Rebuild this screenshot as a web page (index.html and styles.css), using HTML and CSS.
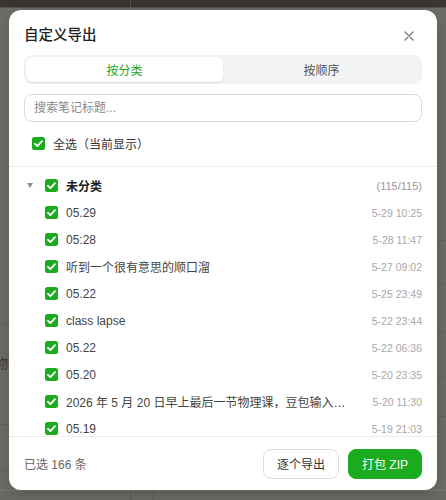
FILE: index.html
```html
<!DOCTYPE html>
<html lang="zh">
<head>
<meta charset="utf-8">
<title>自定义导出</title>
<link rel="stylesheet" href="styles.css">
</head>
<body>
<div class="page">
  <div class="topbar"><span class="topbar-seg"></span><span class="topbar-seg"></span></div>
  <div class="bg-cols">
    <div class="bg-col">
      <div class="bg-row" style="height:316px"></div>
      <div class="bg-row bg-text-row" style="height:101px"><span class="bg-text">物理</span></div>
      <div class="bg-row" style="height:46px"></div>
    </div>
    <div class="bg-col">
      <div class="bg-row" style="height:233px"></div>
      <div class="bg-row" style="height:44px"></div>
      <div class="bg-row" style="height:47px"></div>
      <div class="bg-row" style="height:46px"></div>
      <div class="bg-row" style="height:39px"></div>
    </div>
  </div>
  <div class="bottombar"><span class="bb-seg"></span><span class="bb-seg"></span><span class="bb-seg"></span></div>
</div>

<div class="overlay">
  <div class="modal">
    <div class="modal-head">
      <div class="title-row">
        <h2 class="title">自定义导出</h2>
        <button class="close" aria-label="关闭">
          <svg width="10" height="10" viewBox="0 0 10 10"><path d="M1 1L9 9M9 1L1 9" stroke="#777" stroke-width="1.3" stroke-linecap="round"/></svg>
        </button>
      </div>
      <div class="tabs">
        <div class="tab active">按分类</div>
        <div class="tab">按顺序</div>
      </div>
      <input class="search" type="text" placeholder="搜索笔记标题...">
      <label class="select-all">
        <span class="cb"><svg width="13" height="13" viewBox="0 0 13 13"><path d="M3 6.8L5.4 9.1L10 4.1" fill="none" stroke="#fff" stroke-width="1.8" stroke-linecap="round" stroke-linejoin="round"/></svg></span>
        <span>全选（当前显示）</span>
      </label>
    </div>

    <div class="list">
      <div class="row group">
        <span class="caret"></span>
        <span class="cb"><svg width="13" height="13" viewBox="0 0 13 13"><path d="M3 6.8L5.4 9.1L10 4.1" fill="none" stroke="#fff" stroke-width="1.8" stroke-linecap="round" stroke-linejoin="round"/></svg></span>
        <span class="name">未分类</span>
        <span class="meta count">(115/115)</span>
      </div>
      <div class="row item">
        <span class="cb"><svg width="13" height="13" viewBox="0 0 13 13"><path d="M3 6.8L5.4 9.1L10 4.1" fill="none" stroke="#fff" stroke-width="1.8" stroke-linecap="round" stroke-linejoin="round"/></svg></span>
        <span class="name">05.29</span><span class="meta">5-29 10:25</span>
      </div>
      <div class="row item">
        <span class="cb"><svg width="13" height="13" viewBox="0 0 13 13"><path d="M3 6.8L5.4 9.1L10 4.1" fill="none" stroke="#fff" stroke-width="1.8" stroke-linecap="round" stroke-linejoin="round"/></svg></span>
        <span class="name">05:28</span><span class="meta">5-28 11:47</span>
      </div>
      <div class="row item">
        <span class="cb"><svg width="13" height="13" viewBox="0 0 13 13"><path d="M3 6.8L5.4 9.1L10 4.1" fill="none" stroke="#fff" stroke-width="1.8" stroke-linecap="round" stroke-linejoin="round"/></svg></span>
        <span class="name">听到一个很有意思的顺口溜</span><span class="meta">5-27 09:02</span>
      </div>
      <div class="row item">
        <span class="cb"><svg width="13" height="13" viewBox="0 0 13 13"><path d="M3 6.8L5.4 9.1L10 4.1" fill="none" stroke="#fff" stroke-width="1.8" stroke-linecap="round" stroke-linejoin="round"/></svg></span>
        <span class="name">05.22</span><span class="meta">5-25 23:49</span>
      </div>
      <div class="row item">
        <span class="cb"><svg width="13" height="13" viewBox="0 0 13 13"><path d="M3 6.8L5.4 9.1L10 4.1" fill="none" stroke="#fff" stroke-width="1.8" stroke-linecap="round" stroke-linejoin="round"/></svg></span>
        <span class="name">class lapse</span><span class="meta">5-22 23:44</span>
      </div>
      <div class="row item">
        <span class="cb"><svg width="13" height="13" viewBox="0 0 13 13"><path d="M3 6.8L5.4 9.1L10 4.1" fill="none" stroke="#fff" stroke-width="1.8" stroke-linecap="round" stroke-linejoin="round"/></svg></span>
        <span class="name">05.22</span><span class="meta">5-22 06:36</span>
      </div>
      <div class="row item">
        <span class="cb"><svg width="13" height="13" viewBox="0 0 13 13"><path d="M3 6.8L5.4 9.1L10 4.1" fill="none" stroke="#fff" stroke-width="1.8" stroke-linecap="round" stroke-linejoin="round"/></svg></span>
        <span class="name">05.20</span><span class="meta">5-20 23:35</span>
      </div>
      <div class="row item">
        <span class="cb"><svg width="13" height="13" viewBox="0 0 13 13"><path d="M3 6.8L5.4 9.1L10 4.1" fill="none" stroke="#fff" stroke-width="1.8" stroke-linecap="round" stroke-linejoin="round"/></svg></span>
        <span class="name">2026 年 5 月 20 日早上最后一节物理课，豆包输入…</span><span class="meta">5-20 11:30</span>
      </div>
      <div class="row item">
        <span class="cb"><svg width="13" height="13" viewBox="0 0 13 13"><path d="M3 6.8L5.4 9.1L10 4.1" fill="none" stroke="#fff" stroke-width="1.8" stroke-linecap="round" stroke-linejoin="round"/></svg></span>
        <span class="name">05.19</span><span class="meta">5-19 21:03</span>
      </div>
    </div>

    <div class="modal-foot">
      <span class="selected">已选 166 条</span>
      <div class="actions">
        <button class="btn">逐个导出</button>
        <button class="btn primary">打包 ZIP</button>
      </div>
    </div>
  </div>
</div>
</body>
</html>
```

FILE: styles.css
```css
* { box-sizing: border-box; }
html, body { margin: 0; padding: 0; }
body {
  width: 446px;
  height: 500px;
  overflow: hidden;
  background: #6e6c67;
  font-family: "Liberation Sans", "Noto Sans CJK SC", sans-serif;
  position: relative;
}

/* underlying page (dimmed) */
.page { height: 500px; display: flex; flex-direction: column; }
.topbar {
  height: 8px;
  background: #3b342f;
  border-bottom: 1px solid #57524d;
  display: grid;
  grid-template-columns: 130px 1fr;
}
.topbar-seg + .topbar-seg { border-left: 1px solid #5a534d; }
.bg-cols { flex: 1; display: grid; grid-template-columns: 1fr 1fr; }
.bg-row { border-bottom: 1px solid #64625d; position: relative; }
.bg-text-row { display: flex; align-items: center; }
.bg-text-row .bg-text {
  color: #3c3b38;
  font-size: 13px;
  margin-left: -5px;
  margin-top: -24px;
}
.bottombar {
  height: 10px;
  border-top: 1px solid #7a7873;
  background: #6b6964;
  display: grid;
  grid-template-columns: 130px 23px 1fr;
}
.bb-seg + .bb-seg { border-left: 1px solid #5e5c58; }

/* overlay + modal */
.overlay {
  position: absolute;
  inset: 0;
  padding: 10px 9px;
}
.modal {
  width: 428px;
  height: 480px;
  background: #fff;
  border-radius: 12px;
  box-shadow: 0 4px 16px rgba(0,0,0,0.18);
  display: flex;
  flex-direction: column;
  overflow: hidden;
}
.modal-head { padding: 15px 15px 10px; border-bottom: 1px solid #ececec; }
.title-row { display: flex; align-items: center; justify-content: space-between; height: 20px; }
.title { margin: 0; font-size: 14.5px; font-weight: 500; color: #222; line-height: 20px; }
.close {
  border: 0; background: none; padding: 0;
  width: 10px; height: 10px; margin-right: 8px; margin-top: 1px;
  display: flex; cursor: pointer;
}
.tabs {
  margin-top: 10px;
  height: 29px;
  background: #f2f3f5;
  border-radius: 8px;
  padding: 2px;
  display: grid;
  grid-template-columns: 1fr 1fr;
}
.tab {
  display: flex; align-items: center; justify-content: center;
  font-size: 12px; color: #555;
  border-radius: 6px;
}
.tab.active { background: #fff; color: #1fa626; box-shadow: 0 1px 2px rgba(0,0,0,0.1); }
.search {
  display: block;
  margin-top: 10px;
  width: 100%;
  height: 28px;
  border: 1px solid #dcdcdc;
  border-radius: 8px;
  padding: 0 9px;
  font-family: inherit;
  font-size: 12px;
  color: #333;
  outline: none;
}
.search::placeholder { color: #8a8a8a; }
.select-all {
  margin-top: 8px;
  height: 26px;
  padding-left: 8px;
  display: flex; align-items: center; gap: 8px;
  font-size: 12px; color: #333;
}

.cb {
  flex: none;
  width: 13px; height: 13px;
  border-radius: 2.5px;
  background: #1aab1f;
  display: inline-flex;
}

.list { flex: 1; overflow: hidden; padding: 5px 15px 0; }
.row { height: 27px; display: flex; align-items: center; font-size: 12px; }
.row .cb { margin-right: 8px; }
.item { padding-left: 21px; }
.caret {
  width: 21px; height: 5px; flex: none;
  position: relative;
}
.caret::before {
  content: "";
  position: absolute; left: 3px; top: 0;
  border-left: 3.5px solid transparent;
  border-right: 3.5px solid transparent;
  border-top: 5px solid #8e8e8e;
}
.name { color: #444; flex: 1; min-width: 0; white-space: nowrap; overflow: hidden; text-overflow: ellipsis; }
.group .name { font-weight: 700; color: #222; }
.meta { flex: none; margin-left: 20px; font-size: 10.5px; color: #a8a8a8; }
.meta.count { font-size: 11px; color: #999; }

.modal-foot {
  height: 54px;
  border-top: 1px solid #ececec;
  padding: 0 15px;
  display: flex; align-items: center; justify-content: space-between;
}
.selected { font-size: 12px; color: #666; }
.actions { display: flex; gap: 9px; }
.btn {
  height: 30px;
  padding: 0 13px;
  border: 1px solid #dedede;
  border-radius: 8px;
  background: #fff;
  font-family: inherit;
  font-size: 12px;
  color: #333;
}
.btn.primary { background: #1aab1f; border-color: #1aab1f; color: #fff; }
```
